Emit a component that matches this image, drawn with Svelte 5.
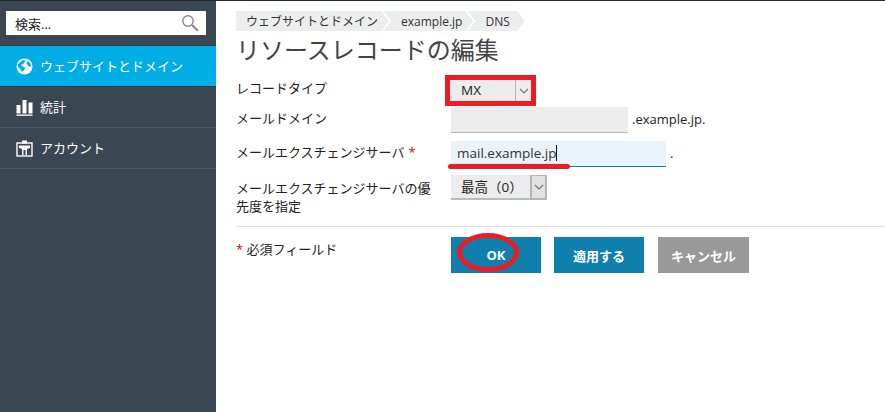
<script>
	const nav = [
		{ id: 'web', label: 'ウェブサイトとドメイン', active: true },
		{ id: 'stats', label: '統計' },
		{ id: 'account', label: 'アカウント' }
	];
	const crumbs = ['ウェブサイトとドメイン', 'example.jp', 'DNS'];
</script>

<div class="page">
	<aside class="sidebar">
		<div class="search-wrap">
			<div class="search">
				<span>検索...</span>
				<svg width="18" height="18" viewBox="0 0 18 18" fill="none" stroke="#8a8a8a">
					<circle cx="7" cy="7" r="5.2" stroke-width="1.4" />
					<path d="M11 11l5.800 5.800" stroke-width="2" />
				</svg>
			</div>
		</div>
		<nav>
			{#each nav as item}
				<div class="nav-item" class:active={item.active}>
					{#if item.id === 'web'}
						<svg width="17" height="17" viewBox="0 0 17 17">
							<circle cx="8.500" cy="8.500" r="8" fill="#fff" />
							<path d="M2 6c2-1 3-3 5-4 2 0 3 1 2 2L7 6 5 7c1 2 3 1 4 3 0 2-2 3-3 4C5 12 4 10 2 9zM12 3c2 1 3 3 3 5l-2 1-1-2-2-1z" fill="#00ade4" />
						</svg>
					{:else if item.id === 'stats'}
						<svg width="17" height="17" viewBox="0 0 17 17" fill="#fff">
							<rect x="0.500" y="6" width="4" height="8.500" />
							<rect x="6.500" y="1" width="4" height="13.500" />
							<rect x="12.500" y="3.500" width="4" height="11" />
							<rect x="0.500" y="15.500" width="16" height="1.300" />
						</svg>
					{:else}
						<svg width="17" height="17" viewBox="0 0 17 17">
							<rect x="1" y="3" width="15" height="13" fill="none" stroke="#fff" stroke-width="1.400" />
							<rect x="6" y="0.500" width="5" height="3" fill="#fff" />
							<path d="M3 5.500h11v2.500l-3 1v6H9.500v-5h-2v5H6V9L3 8z" fill="#fff" />
						</svg>
					{/if}
					<span>{item.label}</span>
				</div>
			{/each}
		</nav>
	</aside>

	<main class="content">
		<div class="breadcrumb">
			{#each crumbs as c}
				<span class="crumb">{c}</span>
			{/each}
		</div>
		<h1>リソースレコードの編集</h1>

		<div class="form">
			<div class="row row-type">
				<div class="label">レコードタイプ</div>
				<div class="field">
					<div class="select type-select">
						<span class="select-text">MX</span>
						<span class="select-arrow">
							<svg width="10" height="6" viewBox="0 0 10 6" fill="none" stroke="#777" stroke-width="1.200"><path d="M1 1l4 4 4-4" /></svg>
						</span>
					</div>
				</div>
			</div>

			<div class="row row-domain">
				<div class="label">メールドメイン</div>
				<div class="field">
					<div class="input"></div>
					<span class="suffix">.example.jp.</span>
				</div>
			</div>

			<div class="row row-server">
				<div class="label">メールエクスチェンジサーバ<span class="req spaced">*</span></div>
				<div class="field">
					<div class="input focused">
						mail.example.jp<span class="caret"></span>
						<span class="red-line"></span>
					</div>
					<span class="suffix dot">.</span>
				</div>
			</div>

			<div class="row row-priority">
				<div class="label">メールエクスチェンジサーバの優先度を指定</div>
				<div class="field">
					<div class="select priority-select">
						<span class="select-text">最高（0）</span>
						<span class="select-arrow">
							<svg width="10" height="6" viewBox="0 0 10 6" fill="none" stroke="#777" stroke-width="1.200"><path d="M1 1l4 4 4-4" /></svg>
						</span>
					</div>
				</div>
			</div>

			<div class="row row-actions">
				<div class="label"><span class="req">*</span> 必須フィールド</div>
				<div class="field buttons">
					<button class="btn primary ok" type="button">OK<span class="red-ellipse"></span></button>
					<button class="btn primary" type="button">適用する</button>
					<button class="btn cancel" type="button">キャンセル</button>
				</div>
			</div>
		</div>
	</main>
</div>

<style>
	:global(body) {
		margin: 0;
		background: #fff;
	}
	.page {
		display: flex;
		width: 885px;
		height: 412px;
		overflow: hidden;
		font-family: "Open Sans", "Noto Sans CJK JP", sans-serif;
		font-size: 13px;
		color: #222;
	}

	/* sidebar */
	.sidebar {
		width: 216px;
		flex: none;
		background: #3a4652;
		border-top: 1px solid #23292f;
		box-sizing: border-box;
		color: #fff;
	}
	.search-wrap {
		padding: 10px 10px 10px 6px;
		border-bottom: 1px solid #2f3a45;
	}
	.search {
		display: flex;
		justify-content: space-between;
		align-items: center;
		height: 24px;
		background: #fff;
		color: #222;
		padding: 0 7px 0 9px;
	}
	.nav-item {
		display: flex;
		align-items: center;
		gap: 7px;
		height: 40px;
		padding-left: 16px;
		border-bottom: 1px solid #4b5763;
		font-size: 13px;
	}
	.nav-item span {
		margin-top: -2px;
	}
	.nav-item.active {
		background: #00ade4;
		border-bottom-color: #2f3a45;
	}

	/* main */
	.content {
		flex: 1;
		box-sizing: border-box;
		padding: 10px 0 0 20px;
		border-top: 1px solid #23292f;
	}
	.breadcrumb {
		display: flex;
		height: 20px;
	}
	.crumb {
		display: flex;
		align-items: center;
		height: 20px;
		padding: 0 11px 0 18px;
		margin-left: -6px;
		background: #eceded;
		font-size: 12px;
		color: #333;
		clip-path: polygon(0 0, calc(100% - 8px) 0, 100% 50%, calc(100% - 8px) 100%, 0 100%, 8px 50%);
	}
	.crumb:first-child {
		margin-left: 0;
		padding-left: 10px;
		clip-path: polygon(0 0, calc(100% - 8px) 0, 100% 50%, calc(100% - 8px) 100%, 0 100%);
	}
	.crumb:last-child {
		padding-right: 15px;
	}
	h1 {
		margin: 2px 0 0;
		font-size: 24px;
		font-weight: 400;
		line-height: 34px;
		color: #444;
	}
	.form {
		width: 649px;
		margin-top: 8px;
	}
	.row {
		display: grid;
		grid-template-columns: 215px 1fr;
		box-sizing: border-box;
	}
	.label {
		line-height: 18px;
		padding-right: 10px;
	}
	.req {
		color: #d00;
	}
	.spaced {
		margin-left: 4px;
	}
	.field {
		display: flex;
		align-items: flex-start;
	}
	.select {
		display: flex;
		height: 25px;
		box-sizing: border-box;
		background: #ececec;
		border-bottom: 2px solid #b8bcc0;
	}
	.select-text {
		flex: 1;
		line-height: 25px;
		padding-left: 10px;
		font-size: 13.500px;
	}
	.select-arrow {
		display: flex;
		align-items: center;
		justify-content: center;
		width: 17px;
		background: #e2e2e2;
		border: 2px solid #b5b5b5;
		border-top-width: 1px;
		margin-bottom: -2px;
		box-sizing: border-box;
	}
	.row-type {
		height: 31px;
		padding-top: 5px;
	}
	.row-type .label {
		margin-top: -1px;
	}
	.type-select {
		width: 81px;
		height: 21px;
		margin-left: -1px;
		outline: 5px solid #ed1c24;
		border-bottom: none;
	}
	.type-select .select-text {
		line-height: 21px;
		padding-left: 11px;
	}
	.type-select .select-arrow {
		width: 16px;
		border: none;
		border-left: 1px solid #b5b5b5;
		margin-bottom: 0;
		background: #ececec;
	}
	.input {
		position: relative;
		width: 177px;
		height: 26px;
		box-sizing: border-box;
		background: #ececec;
		border-bottom: 1px solid #b0b6bc;
	}
	.focused {
		width: 215px;
		background: #eaf3f9;
		border-bottom-color: #0f7fae;
		padding-left: 6px;
		line-height: 25px;
		font-size: 13.500px;
		color: #333;
	}
	.caret {
		display: inline-block;
		width: 1px;
		height: 16px;
		background: #111;
		vertical-align: -3px;
	}
	.red-line {
		position: absolute;
		left: -3px;
		top: 23px;
		width: 122px;
		height: 5px;
		border-radius: 3px;
		background: #ed1c24;
	}
	.suffix {
		margin-left: 4px;
		line-height: 25px;
	}
	.dot {
		margin-left: 4px;
	}
	.row-domain {
		height: 35px;
		padding-top: 1px;
	}
	.row-domain .label {
		padding-top: 2px;
	}
	.row-server {
		height: 34px;
	}
	.row-server .label {
		padding-top: 2px;
	}
	.row-priority {
		height: 52px;
		border-bottom: 1px solid #dedede;
	}
	.row-priority .label {
		padding-top: 4px;
	}
	.priority-select {
		width: 96px;
	}
	.row-actions {
		padding-top: 10px;
	}
	.row-actions .label {
		padding-top: 3px;
	}
	.buttons {
		gap: 13px;
	}
	.btn {
		position: relative;
		width: 90px;
		height: 36px;
		border: none;
		padding: 0;
		font-family: inherit;
		font-size: 13px;
		font-weight: 700;
		color: #fff;
	}
	.primary {
		background: #0f7fae;
	}
	.cancel {
		width: 91px;
		margin-left: 1px;
		background: #999;
	}
	.red-ellipse {
		position: absolute;
		left: 6px;
		top: -4px;
		width: 62px;
		height: 39px;
		box-sizing: border-box;
		border: 5px solid #ed1c24;
		border-radius: 50%;
	}
</style>
